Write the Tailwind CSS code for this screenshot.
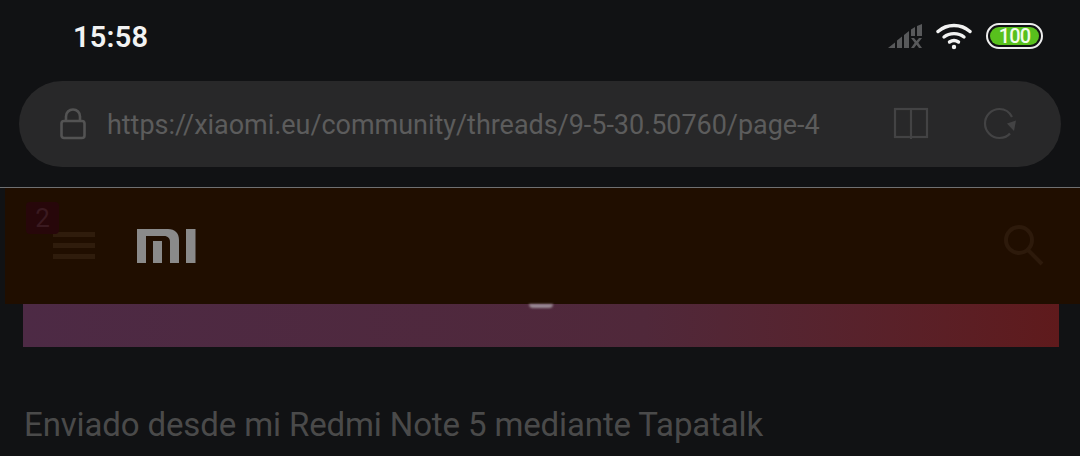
<!DOCTYPE html>
<html lang="en">
<head>
  <meta charset="UTF-8" />
  <title>Xiaomi EU</title>
  <script src="https://cdn.jsdelivr.net/npm/@tailwindcss/browser@4"></script>
</head>
<body class="bg-[#111214] w-[1080px] h-[456px] overflow-hidden font-['Roboto',sans-serif]">

  <!-- Status bar -->
  <div class="h-[81px] flex items-start justify-between pl-[73px] pr-[37px] pt-[20px]">
    <span class="text-[29px] leading-[34px] font-semibold text-[#f2f2f2] tracking-[0.2px]">15:58</span>
    <div class="flex items-center gap-[14px] pt-[2px]">
      <svg width="34" height="24" viewBox="0 0 34 24" fill="#58595b">
        <path d="M0 24 L7 18.500 V24 Z"/>
        <path d="M9 16.500 L14 12.500 V24 H9 Z"/>
        <path d="M16 11 L21 7 V24 H16 Z"/>
        <path d="M23 5.500 L27 3 V12 H23 Z"/>
        <path d="M29 2 L34 0 V12 H29 Z"/>
        <path d="M23 14 H26 L28.500 17 L31 14 H34 L30.300 18.800 L34 24 H31 L28.500 20.700 L26 24 H23 L26.700 18.800 Z"/>
      </svg>
      <svg width="36" height="28" viewBox="0 0 36 28" fill="none" stroke="#f2f2f2" stroke-width="3.400" stroke-linecap="round">
        <path d="M2 9.500 C11 1.500 25 1.500 34 9.500"/>
        <path d="M8 15 C13.500 10.500 22.500 10.500 28 15"/>
        <path d="M13.500 20 C16.500 18 19.500 18 22.500 20"/>
        <circle cx="18" cy="25" r="1.400" fill="#f2f2f2" stroke-width="1.600"/>
      </svg>
      <div class="w-[57px] h-[26px] rounded-full border-[2px] border-[#eeeeee] p-[2px] flex">
        <div class="flex-1 rounded-full bg-[#58c01d] flex items-center justify-center text-[20px] leading-none font-medium text-[#f2fbec] tracking-[-0.8px]">100</div>
      </div>
    </div>
  </div>

  <!-- Address bar -->
  <div class="mx-[19px] h-[86px] rounded-[43px] bg-[#282829] flex items-center pl-[41px]">
    <svg width="26" height="32" viewBox="0 0 26 32" fill="none" stroke="#535353" stroke-width="2.600">
      <rect x="1.500" y="13" width="23" height="17" rx="2.500"/>
      <path d="M6 13 V8.500 C6 4.500 9 1.500 13 1.500 C17 1.500 20 4.500 20 8.500 V13"/>
    </svg>
    <span class="ml-[21px] mt-[2px] text-[27px] leading-none text-[#5c5c5c] w-[756px] whitespace-nowrap tracking-[-0.04px]">https://xiaomi.eu/community/threads/9-5-30.50760/page-4</span>
    <svg class="ml-[30px]" width="36" height="34" viewBox="0 0 36 34" fill="none" stroke="#434344" stroke-width="2.200">
      <rect x="2" y="2" width="32" height="28"/>
      <path d="M18 2 V32"/>
    </svg>
    <svg class="ml-[54px]" width="34" height="34" viewBox="0 0 34 34" fill="none" stroke="#434344" stroke-width="2.200">
      <path d="M29 10 C26.500 5 22 2 16.500 2 C8.500 2 2 8.500 2 16.500 C2 24.500 8.500 31 16.500 31 C20.500 31 24.500 29.500 27 26.500"/>
      <path d="M24 16.500 L33 13.500 L31 24 Z" fill="#434344" stroke="none"/>
    </svg>
  </div>

  <!-- Divider -->
  <div class="mt-[20px] h-px bg-[#6f7072]"></div>

  <!-- Site header -->
  <div class="relative ml-[5px] h-[116px] bg-[#200e00] flex items-center pl-[48px] pr-[35px]">
    <div class="absolute left-[21px] top-[14px] w-[33px] h-[32px] rounded-[4px] bg-[#27070a] flex items-center justify-center text-[26px] leading-none text-[#3a1a20]">2</div>
    <div class="mt-[-4px] pt-[2px] flex flex-col gap-[6px]">
      <div class="w-[42px] h-[5px] bg-[#2f1c0c]"></div>
      <div class="w-[42px] h-[5px] bg-[#2f1c0c]"></div>
      <div class="w-[42px] h-[5px] bg-[#2f1c0c]"></div>
    </div>
    <svg class="ml-[42px] mt-[-1px]" width="60" height="34" viewBox="0 0 60 34" fill="#8a8a8a">
      <path d="M0 0 H31 C38 0 42 4 42 11 V34 H33 V13 C33 9.500 31 7 27 7 H9 V34 H0 Z"/>
      <path d="M16 12 H25 V34 H16 Z"/>
      <path d="M49 0 H58.500 V34 H49 Z"/>
    </svg>
    <svg class="ml-auto" width="42" height="42" viewBox="0 0 42 42" fill="none" stroke="#2d1a0b" stroke-width="4">
      <circle cx="16" cy="15" r="13"/>
      <path d="M25 25 L39 39"/>
    </svg>
  </div>

  <!-- Post image strip -->
  <div class="relative ml-[23px] w-[1036px] h-[43px] bg-gradient-to-r from-[#4d2a45] from-0% via-[#50283a] via-60% to-[#5f1a1c] to-100%">
    <div class="absolute left-[506px] top-0 w-[24px] h-[4px] rounded-b-full bg-[#9a8b94] blur-[1px]"></div>
  </div>

  <!-- Signature -->
  <p class="ml-[24px] mt-[60px] text-[33px] leading-[36px] text-[#4a4a4a] tracking-[-0.13px] whitespace-nowrap">Enviado desde mi Redmi Note 5 mediante Tapatalk</p>
</body>
</html>
